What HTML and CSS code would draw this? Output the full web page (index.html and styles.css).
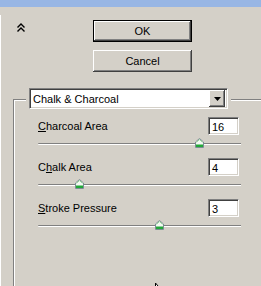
FILE: index.html
```html
<!DOCTYPE html>
<html>
<head>
<meta charset="utf-8">
<link rel="stylesheet" href="styles.css">
</head>
<body>
<div class="titlebar"></div>
<div class="spacer"></div>
<div class="pane">
  <div class="top">
    <svg class="collapse" width="8" height="9" viewBox="0 0 8 9">
      <polyline points="0.5,4.5 4,1 7.5,4.5" fill="none" stroke="#000" stroke-width="1.4"/>
      <polyline points="0.5,8.5 4,5 7.5,8.5" fill="none" stroke="#000" stroke-width="1.4"/>
    </svg>
    <div class="buttons">
      <button class="btn btn-default">OK</button>
      <button class="btn">Cancel</button>
    </div>
  </div>

  <div class="group">
    <div class="group-head">
      <div class="select sunken">
        <span class="select-text">Chalk &amp; Charcoal</span>
        <span class="select-btn">
          <svg width="7" height="4" viewBox="0 0 7 4"><polygon points="0,0 7,0 3.5,4" fill="#000"/></svg>
        </span>
      </div>
    </div>

    <div class="params">
      <div class="param">
        <div class="param-head">
          <span class="label"><u>C</u>harcoal Area</span>
          <span class="field sunken">16</span>
        </div>
        <div class="slider">
          <div class="track"></div>
          <svg class="thumb" style="left:157px" width="9" height="10" viewBox="0 0 9 10"><use href="#thumb"/></svg>
        </div>
      </div>
      <div class="param">
        <div class="param-head">
          <span class="label">C<u>h</u>alk Area</span>
          <span class="field sunken">4</span>
        </div>
        <div class="slider">
          <div class="track"></div>
          <svg class="thumb" style="left:37px" width="9" height="10" viewBox="0 0 9 10"><use href="#thumb"/></svg>
        </div>
      </div>
      <div class="param">
        <div class="param-head">
          <span class="label"><u>S</u>troke Pressure</span>
          <span class="field sunken">3</span>
        </div>
        <div class="slider">
          <div class="track"></div>
          <svg class="thumb" style="left:117px" width="9" height="10" viewBox="0 0 9 10"><use href="#thumb"/></svg>
        </div>
      </div>
    </div>
  </div>
</div>

<svg class="cursor" width="6" height="6" viewBox="0 0 6 6">
  <polygon points="0.5,0 0.5,6 5.5,6" fill="#fff" stroke="#000" stroke-width="1"/>
</svg>

<svg width="0" height="0" class="defs">
  <defs>
    <symbol id="thumb" viewBox="0 0 9 10">
      <polygon points="0.5,4 4.5,0.5 8.5,4 8.5,9.5 0.5,9.5" fill="#f4f8f4" stroke="#7c8c94" stroke-width="1"/>
      <rect x="1" y="6.5" width="7" height="2.5" fill="#22a83a"/>
      <polyline points="1.5,4.3 4.5,1.6 7.5,4.3" fill="none" stroke="#9ad89a" stroke-width="1"/>
    </symbol>
  </defs>
</svg>
</body>
</html>
```

FILE: styles.css
```css
* { box-sizing: border-box; }

html, body {
  margin: 0;
  padding: 0;
  height: 100%;
  overflow: hidden;
}

body {
  background: #d4d0c8;
  font-family: "Liberation Sans", Arial, sans-serif;
  font-size: 11px;
  color: #000;
  position: relative;
}

.titlebar {
  height: 7px;
  background: #98b6e4;
}

.spacer {
  height: 8px;
}

.pane {
  border-left: 1px solid #fff;
  min-height: 271px;
}

.top {
  display: flex;
  align-items: flex-start;
  padding-top: 5px;
}

.collapse {
  display: block;
  margin-left: 16px;
  margin-top: 3px;
}

.buttons {
  display: flex;
  flex-direction: column;
  gap: 8px;
  margin-left: 68px;
}

.btn {
  width: 99px;
  height: 22px;
  padding: 0;
  margin: 0;
  border: none;
  background: #d4d0c8;
  font-family: "Liberation Sans", Arial, sans-serif;
  font-size: 11px;
  color: #000;
  box-shadow: inset -1px -1px #404040, inset 1px 1px #fff, inset -2px -2px #808080;
}

.btn-default {
  border: 1px solid #000;
}

.group {
  margin-top: 27px;
  margin-left: 12px;
  border-top: 1px solid #808080;
  border-left: 1px solid #808080;
  box-shadow: inset 1px 1px #fff;
  padding-left: 24px;
  min-height: 200px;
}

.group-head {
  margin-top: -12px;
  margin-left: -12px;
  padding: 0 3px;
  background: #d4d0c8;
  width: fit-content;
}

.sunken {
  border: 1px solid;
  border-color: #808080 #fff #fff #808080;
  box-shadow: inset 1px 1px #404040, inset -1px -1px #d4d0c8;
  background: #fff;
}

.select {
  width: 199px;
  height: 21px;
  display: flex;
  align-items: center;
  padding: 2px;
}

.select-text {
  flex: 1;
  padding-left: 1px;
}

.select-btn {
  width: 16px;
  height: 17px;
  background: #d4d0c8;
  box-shadow: inset -1px -1px #404040, inset 1px 1px #fff, inset -2px -2px #808080;
  display: flex;
  align-items: center;
  justify-content: center;
}

.select-btn svg {
  display: block;
}

.params {
  margin-top: 8px;
  width: 203px;
  display: flex;
  flex-direction: column;
  gap: 10px;
}

.param-head {
  display: flex;
  justify-content: space-between;
  align-items: center;
  height: 18px;
}

.label u {
  text-decoration: underline;
  text-underline-offset: 1px;
}

.field {
  width: 31px;
  height: 18px;
  margin-right: 2px;
  padding: 2px 0 0 3px;
  font-size: 11px;
  line-height: 14px;
}

.slider {
  position: relative;
  margin-top: 3px;
  height: 10px;
}

.track {
  position: absolute;
  left: 0;
  right: 0;
  top: 5px;
  height: 2px;
  border-top: 1px solid #808080;
  border-bottom: 1px solid #fff;
  border-radius: 1px 0 0 1px;
}

.thumb {
  position: absolute;
  top: 0;
  display: block;
}

.cursor {
  position: absolute;
  left: 155px;
  top: 283px;
}

.defs {
  position: absolute;
}
```
